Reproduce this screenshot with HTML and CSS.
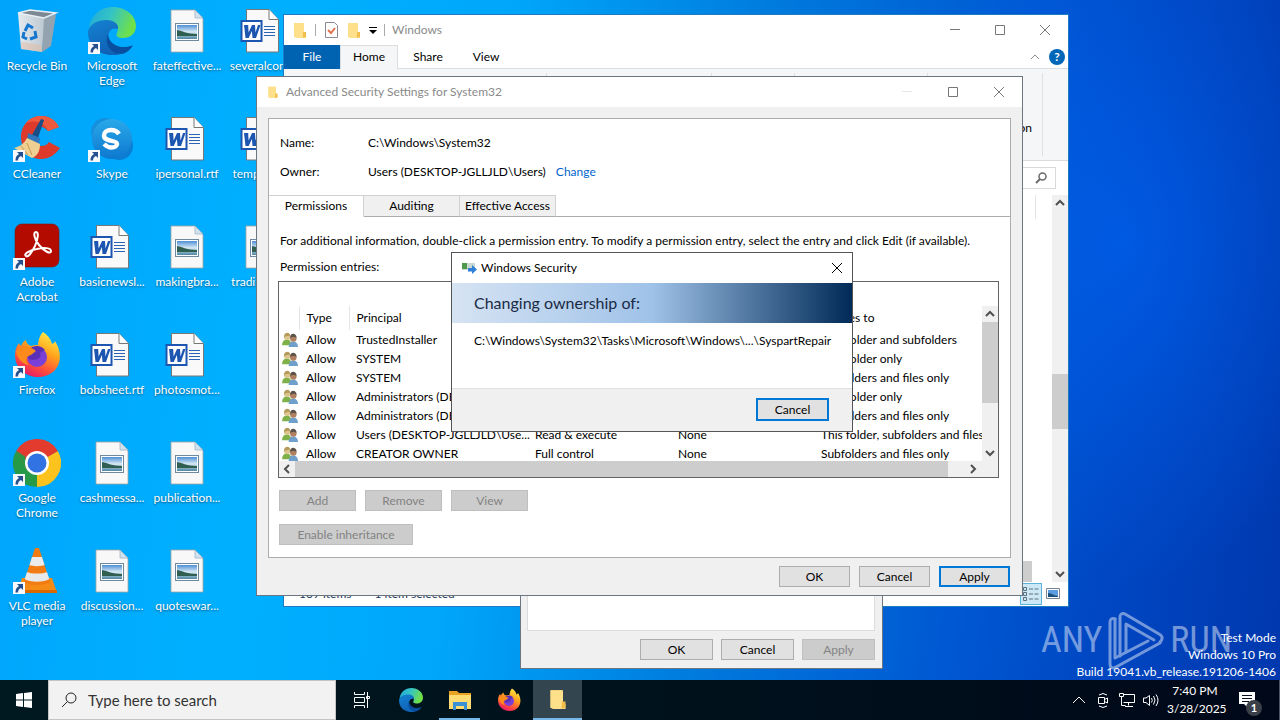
FILE: index.html
```html
<!DOCTYPE html>
<html lang="en">
<head>
  <meta charset="UTF-8">
  <meta name="viewport" content="width=device-width, initial-scale=1.0">
  <title>Desktop</title>
  <link rel="stylesheet" href="styles.css">
</head>
<body>

<!-- Icon sprite -->
<svg class="sprite" aria-hidden="true">
  <defs>
    <linearGradient id="g-edge-top" x1="0" y1="0" x2="1" y2="0.3">
      <stop offset="0" stop-color="#1ea7dc"/><stop offset="0.5" stop-color="#35c4c4"/><stop offset="1" stop-color="#6fe04a"/>
    </linearGradient>
    <linearGradient id="g-edge-left" x1="0" y1="0" x2="0.4" y2="1">
      <stop offset="0" stop-color="#1583d3"/><stop offset="1" stop-color="#1062b5"/>
    </linearGradient>
    <linearGradient id="g-fox" x1="0.8" y1="0" x2="0.3" y2="1">
      <stop offset="0" stop-color="#fff04a"/><stop offset="0.4" stop-color="#ffa41c"/><stop offset="0.75" stop-color="#ff4a3d"/><stop offset="1" stop-color="#e3186b"/>
    </linearGradient>
    <linearGradient id="g-skype" x1="0" y1="0" x2="0" y2="1">
      <stop offset="0" stop-color="#2aa9ea"/><stop offset="1" stop-color="#0d78cf"/>
    </linearGradient>
    <linearGradient id="g-photo" x1="0" y1="0" x2="0" y2="1">
      <stop offset="0" stop-color="#4d8fd6"/><stop offset="0.5" stop-color="#d9ebf5"/><stop offset="1" stop-color="#4d86a4"/>
    </linearGradient>
    <linearGradient id="g-bin" x1="0" y1="0" x2="1" y2="0">
      <stop offset="0" stop-color="#e4eaef"/><stop offset="1" stop-color="#bcc7d1"/>
    </linearGradient>
  </defs>

  <symbol id="i-arrow" viewBox="0 0 48 48">
    <rect x="0" y="35" width="12" height="12" fill="#f6f8fb"/>
    <path d="M4 37h6v6l-2-2c-2 1-3 2-3 4.500H2.500c0-3.500 1-5 3.500-6.500z" fill="#24508f"/>
  </symbol>
  <symbol id="i-bin" viewBox="0 0 48 48">
    <path d="M5 6l27 5-3 34-7-1-14-2z" fill="url(#g-bin)"/>
    <path d="M31 11l12-4-5 32-9 6z" fill="#94a3b0"/>
    <path d="M5 6l12-3 26 3-12 5z" fill="#7c8994" stroke="#e8eef3" stroke-width="1.500"/>
    <path d="M8 35l21 3v7l-21-3z" fill="#e2b9a0" opacity="0.500"/>
    <g fill="none" stroke="#1577cf" stroke-width="3">
      <path d="M12 24l3-6 5 3"/><path d="M22 24l1 6-6 2"/><path d="M14 32l-4-2 1-5"/>
    </g>
  </symbol>
  <symbol id="i-edge" viewBox="0 0 48 48">
    <path d="M1 22C2 9 12 0 25 0c13 0 23 9 23 19 0 8-6 12-13 12-5 0-8-2-6-5 3-6-2-12-10-12C10 14 3 18 1 22z" fill="url(#g-edge-top)"/>
    <path d="M0 25c1-8 10-12 18-12 8 0 13 4 12 9-5-2-10 1-10 9 0 7 5 14 13 16-3 1-6 1-9 1C10 48 0 38 0 25z" fill="url(#g-edge-left)"/>
    <path d="M20 27c-4 9 2 20 14 20 5-1 9-5 11-9-10 5-24 1-25-11z" fill="#0a4ea0"/>
  </symbol>
  <symbol id="i-image" viewBox="0 0 48 48">
    <path d="M8 3h24l8 9v33H8z" fill="#f8f8f8" stroke="#a3a3a3" stroke-width="0.800"/>
    <path d="M32 3v8h8z" fill="#cfe2f1" stroke="#a3b4c2" stroke-width="0.800"/>
    <rect x="12.500" y="16.500" width="23" height="17" fill="#fff" stroke="#6e88a0"/>
    <rect x="14" y="18" width="20" height="14" fill="url(#g-photo)"/>
    <path d="M14 23c6 1 10 4 20 4v2H14z" fill="#305f52"/>
  </symbol>
  <symbol id="i-word" viewBox="0 0 48 48">
    <path d="M8.500 2.500H31l9.500 10v32.500h-32z" fill="#f9f9f9" stroke="#777"/>
    <path d="M31 2.500v10h9.500" fill="#fff" stroke="#777"/>
    <path d="M26 19.500h11M26 22.500h11M26 25.500h11M26 28.500h11" stroke="#2b64b5"/>
    <rect x="3.500" y="14" width="20" height="20" fill="#fff" stroke="#1d56b0" stroke-width="2"/>
    <path d="M6 18h4.200l.4 7.500L14 18h3l.5 7.500L20 18h2.500L18 31h-3.500l-.6-7-3.200 7H7.500z" fill="#1d56b0"/>
  </symbol>
  <symbol id="i-ccleaner" viewBox="0 0 48 48">
    <path d="M46 12C41 3 34 1 28 1 16 1 8 11 8 22c0 12 8 22 20 22 8 0 14-4 19-11l-11-6c-2 3-5 4-8 4-5 0-8-4-8-9s3-10 8-10c3 0 5 2 7 4z" fill="#dd3a2c"/>
    <path d="M46 12C41 3 34 1 28 1c-6 0-11 2-15 7 8-3 17-2 22 8z" fill="#ef5a3e"/>
    <path d="M28 4l3 1-6 18-6-3z" fill="#1b4d87"/>
    <path d="M15 18l12 5-1 7-12-5z" fill="#2f78bd"/>
    <path d="M14 23l13 6c0 8-3 12-8 14L1 33c5-1 10-4 13-10z" fill="#f0cf92"/>
    <path d="M8 31l7 9M14 28l5 12" stroke="#c99a55"/>
  </symbol>
  <symbol id="i-skype" viewBox="0 0 48 48">
    <circle cx="17" cy="17" r="14" fill="#1590dd"/><circle cx="31" cy="31" r="14" fill="#0a7ed3"/>
    <circle cx="24" cy="24" r="20" fill="url(#g-skype)"/>
    <path d="M31 17c-2-3-5-4-8-4-4 0-7 2-7 5.500 0 7 13 4 13 8.500 0 2-2 3.500-5.500 3.500S18 29 16 27" transform="translate(0 2)" fill="none" stroke="#fff" stroke-width="4.500"/>
  </symbol>
  <symbol id="i-acrobat" viewBox="0 0 48 48">
    <rect x="2" y="1" width="44" height="43" rx="7" fill="#b30b00" stroke="#7b1a12" stroke-width="0.600"/>
    <path d="M13 33c-3-2 4-6 11-7 7-2 14-1 14 2 0 4-7 0-12-6-5-6-6-13-3-13s2 7-1 14c-3 6-7 12-9 10z" fill="none" stroke="#fff" stroke-width="2"/>
  </symbol>
  <symbol id="i-firefox" viewBox="0 0 48 48">
    <path d="M30 1c6 4 8 8 9 12 2-1 3-2 3-3 6 9 7 21 0 29-9 10-27 9-35-1C0 30 1 18 6 12c0 1 1 2 2 3 1-3 3-5 5-6 0 3 2 5 5 6 2-1 5-1 7-1 0-5 2-10 5-13z" fill="url(#g-fox)"/>
    <circle cx="24" cy="26" r="10" fill="#7a3fd6"/>
    <path d="M16 18c5-4 12-4 16 1l-5 3c2 4-2 7-7 7-6 0-8-6-4-11z" fill="#5a2fb5"/>
    <path d="M3 20c4-5 13-6 20 0l-5 4c-5 1-6 6-2 10C9 33 4 27 3 20z" fill="#ff8a1c"/>
  </symbol>
  <symbol id="i-chrome" viewBox="0 0 48 48">
    <path d="M24 24L3.200 12A24 24 0 0 1 44.800 12z" fill="#e33b2e"/>
    <path d="M24 24L44.800 12A24 24 0 0 1 24 48z" fill="#fcc31e"/>
    <path d="M24 24v24A24 24 0 0 1 3.200 12z" fill="#269a47"/>
    <path d="M24 12h20.800L24 24zM13.600 30L3.200 12 24 24z" fill="#e33b2e"/>
    <path d="M13.600 30L3.200 12l9 6z" fill="#269a47"/>
    <path d="M34.400 30L24 48V30z" fill="#fcc31e"/>
    <circle cx="24" cy="24" r="12" fill="#fff"/><circle cx="24" cy="24" r="9.500" fill="#3273e4"/>
  </symbol>
  <symbol id="i-vlc" viewBox="0 0 48 48">
    <path d="M9 31h30l5 15H4z" fill="#f58a14"/><path d="M4 43h40v3H4z" fill="#d96800"/>
    <path d="M22 1h4l11 34c-4 4-22 4-26 0z" fill="#f37c12"/>
    <path d="M19 10h10l2.500 8c-3 1.500-12 1.500-15 0z" fill="#ececec"/>
    <path d="M14 25c4 2 16 2 20 0l2.300 7c-5 3.500-20 3.500-24.600 0z" fill="#e8e8e8"/>
  </symbol>
  <symbol id="i-folder" viewBox="0 0 16 16">
    <path d="M2 1h9v14H2z" fill="#fbd778"/><path d="M2 1h10v10l2 1v4H4l-2-1z" fill="#ffe08a"/><path d="M11 10h3v5l-3 1z" fill="#f1bd4b"/>
  </symbol>
  <symbol id="i-check" viewBox="0 0 16 16">
    <path d="M2.500 .5h9l3 3v12h-12z" fill="#fff" stroke="#8a8a94"/><path d="M5 8l3 3 4-5" fill="none" stroke="#e0704c" stroke-width="2"/>
  </symbol>
  <symbol id="i-users" viewBox="0 0 18 16">
    <path d="M0 14c0-4 2-6 5-6s5 2 5 6z" fill="#7fb04a"/><circle cx="5.500" cy="5" r="3.500" fill="#dcc58c"/><path d="M2 6c0-7 7-6 6.500-2L4 4.500z" fill="#b59a5c"/>
    <path d="M7 16c0-4 2-6 5-6s5 2 5 6z" fill="#6f9fcb"/><circle cx="12" cy="7" r="3.500" fill="#b08060"/><path d="M8.500 6c0-6 7-5 7 0l-3-1z" fill="#5c5148"/>
  </symbol>
  <symbol id="i-up" viewBox="0 0 16 16"><path d="M4 10l4-4 4 4" fill="none" stroke="currentColor" stroke-width="2"/></symbol>
  <symbol id="i-down" viewBox="0 0 16 16"><path d="M4 6l4 4 4-4" fill="none" stroke="currentColor" stroke-width="2"/></symbol>
  <symbol id="i-left" viewBox="0 0 16 16"><path d="M10 4L6 8l4 4" fill="none" stroke="currentColor" stroke-width="2"/></symbol>
  <symbol id="i-right" viewBox="0 0 16 16"><path d="M6 4l4 4-4 4" fill="none" stroke="currentColor" stroke-width="2"/></symbol>
  <symbol id="i-min" viewBox="0 0 10 10"><path d="M0 4.500h10" stroke="currentColor"/></symbol>
  <symbol id="i-max" viewBox="0 0 10 10"><path d="M.5 .5h9v9h-9z" fill="none" stroke="currentColor"/></symbol>
  <symbol id="i-close" viewBox="0 0 10 10"><path d="M0 0l10 10M10 0L0 10" stroke="currentColor"/></symbol>
  <symbol id="i-search" viewBox="0 0 16 16"><circle cx="10" cy="6" r="5" fill="none" stroke="currentColor"/><path d="M6.500 9.500L1 15" stroke="currentColor"/></symbol>
  <symbol id="i-explorer" viewBox="0 0 24 24">
    <path d="M1 3h8l2 2h12v16H1z" fill="#e9a323"/><path d="M1 7h22v14H1z" fill="#ffdc72"/>
    <path d="M5 14h14v8h-3v-4H8v4H5z" fill="#3b8fd4"/>
  </symbol>
</svg>

<div class="desktop">
  <!-- Desktop icons, filled column by column -->
  <nav class="icons" aria-label="Desktop icons">
    <a class="icon" href="#"><svg><use href="#i-bin"/></svg><span>Recycle Bin</span></a>
    <a class="icon" href="#"><svg><use href="#i-ccleaner"/><use href="#i-arrow"/></svg><span>CCleaner</span></a>
    <a class="icon" href="#"><svg><use href="#i-acrobat"/><use href="#i-arrow"/></svg><span>Adobe Acrobat</span></a>
    <a class="icon" href="#"><svg><use href="#i-firefox"/><use href="#i-arrow"/></svg><span>Firefox</span></a>
    <a class="icon" href="#"><svg><use href="#i-chrome"/><use href="#i-arrow"/></svg><span>Google Chrome</span></a>
    <a class="icon" href="#"><svg><use href="#i-vlc"/><use href="#i-arrow"/></svg><span>VLC media player</span></a>

    <a class="icon" href="#"><svg><use href="#i-edge"/><use href="#i-arrow"/></svg><span>Microsoft Edge</span></a>
    <a class="icon" href="#"><svg><use href="#i-skype"/><use href="#i-arrow"/></svg><span>Skype</span></a>
    <a class="icon" href="#"><svg><use href="#i-word"/></svg><span>basicnewsl...</span></a>
    <a class="icon" href="#"><svg><use href="#i-word"/></svg><span>bobsheet.rtf</span></a>
    <a class="icon" href="#"><svg><use href="#i-image"/></svg><span>cashmessa...</span></a>
    <a class="icon" href="#"><svg><use href="#i-image"/></svg><span>discussion...</span></a>

    <a class="icon" href="#"><svg><use href="#i-image"/></svg><span>fateffective...</span></a>
    <a class="icon" href="#"><svg><use href="#i-word"/></svg><span>ipersonal.rtf</span></a>
    <a class="icon" href="#"><svg><use href="#i-image"/></svg><span>makingbra...</span></a>
    <a class="icon" href="#"><svg><use href="#i-word"/></svg><span>photosmot...</span></a>
    <a class="icon" href="#"><svg><use href="#i-image"/></svg><span>publication...</span></a>
    <a class="icon" href="#"><svg><use href="#i-image"/></svg><span>quoteswar...</span></a>

    <a class="icon" href="#"><svg><use href="#i-word"/></svg><span>severalcon...</span></a>
    <a class="icon" href="#"><svg><use href="#i-word"/></svg><span>tempcarri...</span></a>
    <a class="icon" href="#"><svg><use href="#i-image"/></svg><span>tradingme...</span></a>
  </nav>

  <div class="build-info">
    <p>Test Mode</p>
    <p>Windows 10 Pro</p>
    <p>Build 19041.vb_release.191206-1406</p>
  </div>
  <div class="watermark">
    <span>ANY</span>
    <svg viewBox="0 0 56 60" width="56" height="60">
      <g fill="none" stroke="currentColor" stroke-width="3" stroke-linejoin="round" stroke-linecap="round">
        <path d="M7 9c-3-1-5 0-5 3v42c0 4 3 5 6 3l44-24"/>
        <path d="M7 9v39l33-17"/>
        <path d="M12 46V7c0-3 2-4 5-3l34 20c4 2 4 5 1 8"/>
        <path d="M18 42V14l28 16"/>
      </g>
    </svg>
    <span>RUN</span>
  </div>

  <!-- File Explorer -->
  <section class="window explorer">
    <header class="titlebar">
      <svg class="ico16"><use href="#i-folder"/></svg>
      <i class="sep"></i>
      <svg class="ico16"><use href="#i-check"/></svg>
      <svg class="ico16"><use href="#i-folder"/></svg>
      <svg class="caret" viewBox="0 0 8 8"><path d="M0 1.500h8" stroke="#000"/><path d="M0 4h8L4 8z"/></svg>
      <i class="sep"></i>
      <span class="title">Windows</span>
      <button class="cap" aria-label="Minimize"><svg><use href="#i-min"/></svg></button>
      <button class="cap" aria-label="Maximize"><svg><use href="#i-max"/></svg></button>
      <button class="cap" aria-label="Close"><svg><use href="#i-close"/></svg></button>
    </header>
    <div class="ribbon-tabs">
      <button class="file">File</button>
      <button class="active">Home</button>
      <button>Share</button>
      <button>View</button>
      <svg class="collapse" viewBox="0 0 10 6"><path d="M1 5l4-4 4 4" fill="none" stroke="#8a8a8a"/></svg>
      <button class="help" aria-label="Help">?</button>
    </div>
    <div class="ribbon">
      <div class="group clipboard"></div>
      <div class="group organize"></div>
      <div class="group new"><i></i></div>
      <div class="group open-group"></div>
      <div class="group select"><i></i><span>Invert selection</span></div>
    </div>
    <div class="address"><label class="find"><input type="search" aria-label="Search Windows"><svg viewBox="0 0 12 12"><circle cx="7.500" cy="4.500" r="3.500" fill="none" stroke="#6b6b6b" stroke-width="1.500"/><path d="M5 7l-4 4" stroke="#6b6b6b" stroke-width="2"/></svg></label></div>
    <div class="files">
      <div class="files-list"><i class="col-line"></i><i class="h-thumb"></i></div>
      <div class="vbar"><svg><use href="#i-up"/></svg><i class="thumb"></i><svg><use href="#i-down"/></svg></div>
    </div>
    <footer class="status">
      <span>109 items</span><span>1 item selected</span>
      <button class="view on" aria-label="Details"><svg viewBox="0 0 16 14"><path d="M.5 .5h3v3h-3zM.5 5.500h3v3h-3zM.5 10.500h3v3h-3zM6 2h4M11.500 2h4M6 7h4M11.500 7h4M6 12h4M11.500 12h4" fill="none" stroke="#5e6f7c"/></svg></button>
      <button class="view" aria-label="Large icons"><svg viewBox="0 0 16 14"><path d="M1.500 1.500h13v10h-13z" fill="#fff" stroke="#7b8490"/><path d="M3 3h10v7H3z" fill="#5b9ce0"/><path d="M3 6c4 0 6 3 10 3v1H3z" fill="#1c4f7a"/></svg></button>
    </footer>
  </section>

  <!-- Folder properties -->
  <section class="window props">
    <div class="props-page"></div>
    <footer class="buttons">
      <button class="btn">OK</button>
      <button class="btn">Cancel</button>
      <button class="btn" disabled>Apply</button>
    </footer>
  </section>

  <!-- Advanced security settings -->
  <section class="window advanced">
    <header class="titlebar">
      <svg class="ico12"><use href="#i-folder"/></svg>
      <span class="title">Advanced Security Settings for System32</span>
      <button class="cap off" aria-label="Minimize" disabled><svg><use href="#i-min"/></svg></button>
      <button class="cap" aria-label="Maximize"><svg><use href="#i-max"/></svg></button>
      <button class="cap" aria-label="Close"><svg><use href="#i-close"/></svg></button>
    </header>
    <div class="page">
      <dl class="facts">
        <dt>Name:</dt><dd>C:\Windows\System32</dd>
        <dt>Owner:</dt><dd>Users (DESKTOP-JGLLJLD\Users) <a href="#">Change</a></dd>
      </dl>
      <div class="tabs">
        <button class="active">Permissions</button><button>Auditing</button><button>Effective Access</button>
      </div>
      <div class="tab-body">
        <p class="hint">For additional information, double-click a permission entry. To modify a permission entry, select the entry and click Edit (if available).</p>
        <p class="entries-label">Permission entries:</p>
        <div class="list">
          <div class="list-view">
            <div class="list-rows">
              <table>
                <colgroup><col class="c-icon"><col class="c-type"><col class="c-principal"><col class="c-access"><col class="c-from"><col></colgroup>
                <thead>
                  <tr><th></th><th>Type</th><th>Principal</th><th>Access</th><th>Inherited from</th><th>Applies to</th></tr>
                </thead>
                <tbody>
                  <tr><td><svg><use href="#i-users"/></svg></td><td>Allow</td><td>TrustedInstaller</td><td>Full control</td><td>None</td><td>This folder and subfolders</td></tr>
                  <tr><td><svg><use href="#i-users"/></svg></td><td>Allow</td><td>SYSTEM</td><td>Modify</td><td>None</td><td>This folder only</td></tr>
                  <tr><td><svg><use href="#i-users"/></svg></td><td>Allow</td><td>SYSTEM</td><td>Full control</td><td>None</td><td>Subfolders and files only</td></tr>
                  <tr><td><svg><use href="#i-users"/></svg></td><td>Allow</td><td>Administrators (DESKTOP-JG...</td><td>Modify</td><td>None</td><td>This folder only</td></tr>
                  <tr><td><svg><use href="#i-users"/></svg></td><td>Allow</td><td>Administrators (DESKTOP-JG...</td><td>Full control</td><td>None</td><td>Subfolders and files only</td></tr>
                  <tr><td><svg><use href="#i-users"/></svg></td><td>Allow</td><td>Users (DESKTOP-JGLLJLD\Use...</td><td>Read &amp; execute</td><td>None</td><td>This folder, subfolders and files</td></tr>
                  <tr><td><svg><use href="#i-users"/></svg></td><td>Allow</td><td>CREATOR OWNER</td><td>Full control</td><td>None</td><td>Subfolders and files only</td></tr>
                </tbody>
              </table>
            </div>
            <div class="vbar"><svg><use href="#i-up"/></svg><i class="thumb"></i><svg><use href="#i-down"/></svg></div>
          </div>
          <div class="hbar"><svg><use href="#i-left"/></svg><i class="thumb"></i><svg><use href="#i-right"/></svg></div>
        </div>
        <div class="actions">
          <button class="btn" disabled>Add</button>
          <button class="btn" disabled>Remove</button>
          <button class="btn" disabled>View</button>
        </div>
        <div class="actions">
          <button class="btn wide" disabled>Enable inheritance</button>
        </div>
      </div>
    </div>
    <footer class="buttons">
      <button class="btn">OK</button>
      <button class="btn">Cancel</button>
      <button class="btn default">Apply</button>
    </footer>
  </section>

  <!-- Ownership progress dialog -->
  <section class="window dialog" role="dialog" aria-label="Windows Security">
    <header class="titlebar">
      <svg class="copy" viewBox="0 0 16 12"><path d="M1 1h13v7H1z" fill="#c9d8d0"/><path d="M1 1h5v6H1z" fill="#4c9a4a"/><path d="M7 6h4V3l5 4.500-5 4.500V9.500H7z" fill="#2f7fd6"/></svg>
      <span class="title">Windows Security</span>
      <button class="cap" aria-label="Close"><svg><use href="#i-close"/></svg></button>
    </header>
    <h1 class="banner">Changing ownership of:</h1>
    <p class="path">C:\Windows\System32\Tasks\Microsoft\Windows\...\SyspartRepair</p>
    <footer class="buttons"><button class="btn default">Cancel</button></footer>
  </section>
</div>

<!-- Taskbar -->
<footer class="taskbar">
  <button class="start" aria-label="Start"><svg viewBox="0 0 16 16"><path d="M0 2l7-1v6.500H0zM8 1l8-1v7.500H8zM0 8.500h7V15l-7-1zM8 8.500h8V16l-8-1z" fill="#fff"/></svg></button>
  <label class="search"><svg><use href="#i-search"/></svg><input type="text" placeholder="Type here to search" aria-label="Search"></label>
  <button class="task" aria-label="Task View"><svg class="small" viewBox="0 0 16 16"><path d="M.5 0v2.500h10V0M.5 16v-2.500h10V16M.5 5.500h10v5H.5zM13.500 0v16M12.500 4.500h3v2h-3z" fill="none" stroke="#fff"/></svg></button>
  <button class="task" aria-label="Microsoft Edge"><svg><use href="#i-edge"/></svg></button>
  <button class="task open" aria-label="File Explorer"><svg><use href="#i-explorer"/></svg></button>
  <button class="task" aria-label="Firefox"><svg><use href="#i-firefox"/></svg></button>
  <button class="task current" aria-label="Folder"><svg class="small"><use href="#i-folder"/></svg></button>
  <div class="tray">
    <svg viewBox="0 0 16 16"><path d="M2 11l6-6 6 6" fill="none" stroke="#fff"/></svg>
    <svg viewBox="0 0 16 16"><path d="M3.500 5.500h6v6h-6zM9.500 7.500l3-1.500v5l-3-1.500M4 3q4-3 8 0M4 14q4 3 8 0" fill="none" stroke="#fff"/></svg>
    <svg viewBox="0 0 16 16"><path d="M4.500 2.500h11v8H4.500M9.500 10.500v3M6 14.500h8M.5 1.500h4v3h-4zM2.500 4.500v9h4" fill="none" stroke="#fff"/></svg>
    <svg viewBox="0 0 16 16"><path d="M.5 6v4.500h2.500l3.500 3v-10L3 6zM8.500 6q1.500 2.500 0 4.500M10.500 4q3 4 0 8.500M13 2.500q4 5.500 0 11.500" fill="none" stroke="#fff"/></svg>
    <time>7:40 PM<br>3/28/2025</time>
    <button class="notify" aria-label="Notifications"><svg viewBox="0 0 16 16"><path d="M0 0h16v12h-7v4l-4-4H0z" fill="#fff"/><path d="M3 3.500h10M3 6.500h10M3 9.500h7" stroke="#0b1020"/></svg><b>1</b></button>
  </div>
</footer>

</body>
</html>
```
FILE: styles.css
```css
* {
  box-sizing: border-box;
}

body {
  margin: 0;
  height: 100vh;
  display: flex;
  flex-direction: column;
  overflow: hidden;
  font: 12px/16px Lato, "Open Sans", sans-serif;
  color: #000;
}

button, input {
  font: inherit;
  color: inherit;
  border: 0;
  padding: 0;
  background: none;
}

p, h1, dl, dd {
  margin: 0;
}

svg, i {
  display: block;
  flex: none;
}

.sprite {
  position: absolute;
  width: 0;
  height: 0;
}

/* Desktop */
.desktop {
  position: relative;
  flex: 1;
  min-height: 0;
  overflow: hidden;
  background:
    radial-gradient(ellipse 240px 340px at 88% 36%, rgba(0, 106, 255, 0.500), transparent),
    linear-gradient(97deg, #00a4fb 0%, #00b0ff 22%, #00a6fa 38%, #0078dc 58%, #0057d2 76%, #0047c3 86%, #0038ae 100%);
}

.icons {
  display: grid;
  grid-template-rows: repeat(6, 108px);
  grid-auto-columns: 74px;
  grid-auto-flow: column;
  column-gap: 1px;
}

.icon {
  display: flex;
  flex-direction: column;
  align-items: center;
  padding-top: 7px;
  gap: 3px;
  color: #fff;
  line-height: 15px;
  text-align: center;
  text-decoration: none;
  text-shadow: 0 1px 2px rgba(0, 0, 0, 0.500);
}

.icon svg {
  width: 48px;
  height: 48px;
}

.build-info {
  position: absolute;
  right: 4px;
  bottom: 0;
  color: #fff;
  line-height: 17px;
  text-align: right;
  z-index: 1;
}

.watermark {
  position: absolute;
  right: 48px;
  bottom: 10px;
  display: flex;
  align-items: center;
  gap: 6px;
  color: #fff;
  opacity: 0.450;
  font: 36px/60px "Liberation Sans Narrow", "Roboto Condensed", "Open Sans Condensed", "Liberation Sans", sans-serif;
}

/* Windows */
.window {
  position: absolute;
  display: flex;
  flex-direction: column;
  border: 1px solid #6b7680;
  background: #f0f0f0;
}

.titlebar {
  display: flex;
  align-items: center;
  height: 30px;
  background: #fff;
  color: #8a8a8a;
}

.title {
  flex: 1;
}

.cap {
  width: 46px;
  height: 30px;
  display: flex;
  align-items: center;
  justify-content: center;
  color: #777;
}

.cap svg {
  width: 10px;
  height: 10px;
}

.cap.off {
  color: #e6e6e6;
}

.btn {
  width: 73px;
  height: 21px;
  border: 1px solid #adadad;
  background: #e1e1e1;
}

.btn:disabled {
  border-color: #bfbfbf;
  background: #ccc;
  color: #838383;
}

.btn.default {
  border: 2px solid #0078d7;
}

.buttons {
  display: flex;
  justify-content: flex-end;
  gap: 8px;
}

/* Scroll bars */
.vbar, .hbar {
  display: flex;
  background: #f0f0f0;
  color: #505050;
}

.vbar {
  flex: none;
  flex-direction: column;
  justify-content: space-between;
  width: 16px;
}

.vbar svg, .hbar svg {
  width: 16px;
  height: 16px;
}

.thumb {
  background: #cdcdcd;
}

/* File Explorer */
.explorer {
  left: 283px;
  top: 14px;
  width: 786px;
  height: 593px;
  border-color: #1f7ac4;
  background: #fff;
}

.explorer > .titlebar {
  padding-left: 8px;
  gap: 7px;
}

.explorer .cap {
  margin-left: -8px;
}

.explorer .title {
  margin-right: 8px;
}

.ico16 {
  width: 16px;
  height: 16px;
}

.ico12 {
  width: 12px;
  height: 12px;
}

.caret {
  width: 8px;
  height: 8px;
}

.sep {
  width: 1px;
  height: 12px;
  background: #aaa;
}

.ribbon-tabs {
  display: flex;
  align-items: center;
  height: 24px;
  padding-right: 3px;
  border-bottom: 1px solid #dcdddf;
}

.ribbon-tabs button {
  width: 56px;
  height: 24px;
}

.ribbon-tabs .file {
  background: #0063b1;
  color: #fff;
}

.ribbon-tabs .active {
  width: 58px;
  border: 1px solid #dcdddf;
  border-bottom: 0;
  background: #f5f6f7;
}

.ribbon-tabs .active + button {
  width: 60px;
}

.collapse {
  width: 10px;
  height: 6px;
  margin-left: auto;
  margin-right: 9px;
}

.ribbon-tabs .help {
  width: 16px;
  height: 16px;
  border-radius: 8px;
  background: #0067b8;
  color: #fff;
  font-weight: bold;
  line-height: 16px;
}

.ribbon {
  display: flex;
  height: 92px;
  padding: 4px 0;
  border-bottom: 1px solid #dadbdc;
  background: #f5f6f7;
}

.group {
  padding-top: 3px;
  border-right: 1px solid #dfe0e1;
}

.group i {
  width: 14px;
  height: 14px;
  background: #3a7fb8;
}

.clipboard { width: 263px; }
.organize { width: 165px; }
.new { width: 83px; padding-left: 48px; }
.open-group { width: 133px; }

.select {
  width: 115px;
  padding-left: 9px;
  padding-right: 10px;
}

.group span {
  display: block;
  padding-top: 30px;
  text-align: right;
}

.address {
  display: flex;
  justify-content: flex-end;
  align-items: center;
  height: 34px;
  padding-right: 12px;
}

.find {
  display: flex;
  align-items: center;
  width: 160px;
  height: 22px;
  padding-right: 8px;
  border: 1px solid #d9d9d9;
}

.find input {
  flex: 1;
  min-width: 0;
}

.find svg {
  width: 12px;
  height: 12px;
}

.files {
  flex: 1;
  display: flex;
}

.files-list {
  flex: 1;
  display: flex;
  flex-direction: column;
  justify-content: space-between;
  align-items: flex-end;
}

.col-line {
  width: 1px;
  height: 24px;
  margin-right: 16px;
  background: #e5e5e5;
}

.h-thumb {
  width: 80px;
  height: 21px;
  margin-right: 20px;
  background: #cdcdcd;
}

.files .thumb {
  height: 55px;
  margin-top: 163px;
  margin-bottom: auto;
}

.status {
  display: flex;
  align-items: center;
  gap: 23px;
  height: 24px;
  padding-left: 15px;
  padding-right: 4px;
  color: #1e395b;
}

.view {
  width: 22px;
  height: 22px;
  display: flex;
  align-items: center;
  justify-content: center;
}

.view svg {
  width: 16px;
  height: 14px;
}

.view.on {
  margin-left: auto;
  margin-right: -23px;
  border: 1px solid #5cb3d9;
  background: #cce8f6;
}

/* Folder properties */
.props {
  left: 520px;
  top: 300px;
  width: 363px;
  height: 369px;
  padding: 6px;
}

.props-page {
  flex: 1;
  margin-right: 1px;
  border: 1px solid #dcdcdc;
  background: #fff;
}

.props .buttons {
  padding: 8px 1px 2px;
}

/* Advanced security settings */
.advanced {
  left: 256px;
  top: 76px;
  width: 767px;
}

.advanced > .titlebar {
  padding-left: 10px;
  gap: 7px;
}

.advanced .cap {
  margin-left: -7px;
}

.advanced .title {
  margin-right: 7px;
}

.page {
  margin: 11px;
  margin-bottom: 8px;
  border: 1px solid #acacac;
  background: #fff;
}

.facts {
  display: grid;
  grid-template-columns: 88px 1fr;
  row-gap: 13px;
  padding: 16px 11px 15px;
}

.facts a {
  margin-left: 7px;
  color: #0066cc;
  text-decoration: none;
}

.tabs {
  display: flex;
  height: 22px;
}

.tabs::after {
  content: "";
  flex: 1;
  border-bottom: 1px solid #acacac;
}

.tabs button {
  width: 96px;
  border: 1px solid #d0d0d0;
  border-left: 0;
  border-bottom-color: #acacac;
  background: #f0f0f0;
}

.tabs .active {
  width: 95px;
  border-bottom-color: #fff;
  background: #fff;
}

.tab-body {
  padding: 16px 11px 12px 9px;
}

.hint, .entries-label {
  padding-left: 2px;
}

.hint {
  white-space: nowrap;
}

.entries-label {
  padding-top: 10px;
  padding-bottom: 6px;
}

.list {
  border: 1px solid #646464;
  padding-top: 24px;
}

.list-view {
  display: flex;
  height: 155px;
}

.list-rows {
  flex: 1;
  min-width: 0;
  overflow: hidden;
}

.list table {
  width: 760px;
  table-layout: fixed;
  border-collapse: collapse;
  white-space: nowrap;
}

.c-icon { width: 20px; }
.c-type { width: 50px; }
.c-principal { width: 179px; }
.c-access, .c-from { width: 143px; }

.list th {
  height: 24px;
  padding: 0 7px;
  border-right: 1px solid #e5e5e5;
  font-weight: normal;
  text-align: left;
}

.list td {
  height: 19px;
  padding: 0 7px;
}

.list td:first-child {
  padding: 0 0 0 3px;
}

.list td svg {
  width: 17px;
  height: 15px;
}

.list .vbar .thumb {
  height: 81px;
  margin-bottom: auto;
}

.hbar .thumb {
  flex: 1;
  margin-right: 17px;
}

.hbar {
  height: 16px;
  padding-right: 17px;
}

.actions {
  display: flex;
  gap: 9px;
  margin-top: 12px;
  padding-left: 1px;
}

.actions .btn {
  width: 77px;
}

.actions + .actions {
  margin-top: 13px;
}

.actions .wide {
  width: 134px;
}

.advanced > .buttons {
  gap: 9px;
  padding: 0 12px 8px;
}

.advanced > .buttons .btn {
  width: 71px;
}

/* Ownership progress dialog */
.dialog {
  left: 451px;
  top: 252px;
  width: 402px;
  border-color: #555;
  background: #fff;
}

.dialog .titlebar {
  padding-left: 9px;
  gap: 4px;
  color: #000;
}

.dialog .cap {
  width: 30px;
  color: #000;
}

.copy {
  width: 16px;
  height: 12px;
}

.banner {
  padding-left: 22px;
  background: linear-gradient(90deg, #d6e3f3, #9fc2e8 50%, #002a57);
  font-size: 16px;
  font-weight: normal;
  line-height: 40px;
  color: #1a2a44;
}

.path {
  padding: 10px 22px 39px;
  white-space: nowrap;
}

.dialog .buttons {
  padding: 9px 23px 10px;
  border-top: 1px solid #dfdfdf;
  background: #f0f0f0;
}

.dialog .btn {
  height: 23px;
}

/* Taskbar */
.taskbar {
  display: flex;
  height: 40px;
  background: linear-gradient(90deg, #001820, #00121c 50%, #000819);
  color: #fff;
}

.start, .task {
  position: relative;
  width: 49px;
  display: flex;
  align-items: center;
  justify-content: center;
}

.start {
  width: 48px;
}

.start svg, .task .small {
  width: 16px;
  height: 16px;
}

.search {
  display: flex;
  align-items: center;
  width: 288px;
  margin-right: 1px;
  padding-left: 12px;
  gap: 11px;
  border: 1px solid #c4c4c4;
  background: #f2f2f2;
  color: #222;
}

.search svg {
  width: 16px;
  height: 16px;
}

.search input {
  flex: 1;
  min-width: 0;
  font-size: 15px;
}

.search input::placeholder {
  color: #333;
  opacity: 1;
}

.task svg {
  width: 24px;
  height: 24px;
}

.open::after {
  content: "";
  position: absolute;
  left: 4px;
  right: 4px;
  bottom: 0;
  height: 2px;
  background: #76b9ed;
}

.current {
  border-bottom: 2px solid #76b9ed;
  background: #33464f;
}

.task.current .small {
  width: 20px;
  height: 20px;
}

.tray {
  display: flex;
  align-items: center;
  margin-left: auto;
  gap: 8px;
}

.tray > svg {
  width: 16px;
  height: 16px;
}

.tray time {
  width: 56px;
  line-height: 18px;
  text-align: center;
}

.notify {
  position: relative;
  width: 49px;
  height: 40px;
  padding-left: 8px;
  border-right: 1px solid #4a5563;
}

.notify svg {
  width: 16px;
  height: 16px;
}

.notify b {
  position: absolute;
  left: 15px;
  bottom: 4px;
  width: 16px;
  height: 16px;
  border-radius: 8px;
  background: #3a3f48;
  font-size: 11px;
}
```
